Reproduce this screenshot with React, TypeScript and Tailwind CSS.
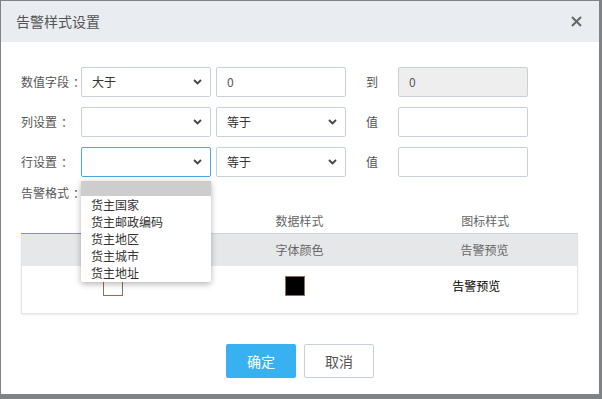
import React from 'react';

const font = { fontFamily: '"Noto Sans CJK SC", "Liberation Sans", sans-serif' };

const Chevron = () => (
  <svg width="9" height="6" viewBox="0 0 9 6" className="shrink-0">
    <path d="M1 1 L4.5 4.5 L8 1" fill="none" stroke="#444" strokeWidth="1.8" />
  </svg>
);

const Select = ({ value = '', focused = false }: { value?: string; focused?: boolean }) => (
  <div
    className={`w-[130px] h-[30px] flex items-center justify-between pl-[10px] pr-[8px] bg-white border rounded-[2px] ${
      focused ? 'border-[#4aa8e8]' : 'border-[#c8d0d8]'
    }`}
  >
    <span className="text-[12px] text-[#333]">{value}</span>
    <Chevron />
  </div>
);

const Input = ({ value = '', disabled = false }: { value?: string; disabled?: boolean }) => (
  <div
    className={`w-[130px] h-[30px] flex items-center px-[10px] border border-[#c8d0d8] rounded-[2px] ${
      disabled ? 'bg-[#eeeeee]' : 'bg-white'
    }`}
  >
    <span className="text-[12px] text-[#555]">{value}</span>
  </div>
);

const Label = ({ children }: { children: React.ReactNode }) => (
  <div className="w-[60px] text-[12px] text-[#555] whitespace-nowrap">
    {children}
    <span className="ml-[4px]">：</span>
  </div>
);

const options = ['货主国家', '货主邮政编码', '货主地区', '货主城市', '货主地址'];

export default function App() {
  return (
    <div className="w-[602px] h-[399px] bg-[#7f8286] pt-px pl-px overflow-hidden" style={font}>
      <div className="w-[598px] h-[393px] bg-white flex flex-col">
        {/* 标题栏 */}
        <div className="h-[41px] bg-[#e9ecf0] flex items-center justify-between pl-[15px] pr-[17px]">
          <span className="text-[14px] text-[#555]">告警样式设置</span>
          <svg width="11" height="11" viewBox="0 0 11 11">
            <path d="M1 1 L10 10 M10 1 L1 10" stroke="#666" strokeWidth="2" />
          </svg>
        </div>

        {/* 表单 */}
        <div className="relative flex flex-col pt-[25px] pl-[20px]">
          <div className="flex items-center h-[30px]">
            <Label>数值字段</Label>
            <Select value="大于" />
            <div className="ml-[5px]">
              <Input value="0" />
            </div>
            <div className="w-[52px] text-center text-[12px] text-[#555]">到</div>
            <Input value="0" disabled />
          </div>
          <div className="flex items-center h-[30px] mt-[10px]">
            <Label>列设置</Label>
            <Select />
            <div className="ml-[5px]">
              <Select value="等于" />
            </div>
            <div className="w-[52px] text-center text-[12px] text-[#555]">值</div>
            <Input />
          </div>
          <div className="flex items-center h-[30px] mt-[10px]">
            <Label>行设置</Label>
            <Select focused />
            <div className="ml-[5px]">
              <Select value="等于" />
            </div>
            <div className="w-[52px] text-center text-[12px] text-[#555]">值</div>
            <Input />
          </div>
          <div className="h-[18px] mt-[7px] flex items-center text-[12px] text-[#555]">
            告警格式<span className="ml-[4px]">：</span>
          </div>

          {/* 样式表格 */}
          <div className="w-[557px]">
            <div className="flex h-[32px] text-[12px] text-[#666]">
              <div className="flex-1 border-b border-[#41a9e6]" />
              <div className="flex-1 flex items-center justify-center pt-[6px] border-b border-[#cfd6dd]">数据样式</div>
              <div className="flex-1 flex items-center justify-center pt-[6px] border-b border-[#cfd6dd]">图标样式</div>
            </div>
            <div className="border-x border-b border-[#e2e4e6] shadow-[0_1px_2px_rgba(0,0,0,0.08)]">
              <div className="flex h-[32px] bg-[#e6e7e9] text-[12px] text-[#666]">
                <div className="flex-1" />
                <div className="flex-1 flex items-center justify-center">字体颜色</div>
                <div className="flex-1 flex items-center justify-center">告警预览</div>
              </div>
              <div className="flex h-[47px] pt-[10px]">
                <div className="flex-1 flex justify-center">
                  <div className="w-[20px] h-[20px] bg-white border border-[#8c7058]" />
                </div>
                <div className="flex-1 flex justify-center">
                  <div className="w-[20px] h-[20px] bg-black border border-[#8c7058]" />
                </div>
                <div className="flex-1 flex justify-center h-[20px] items-center pr-[10px]">
                  <span className="text-[12px] text-black">告警预览</span>
                </div>
              </div>
            </div>
          </div>

          {/* 下拉列表 */}
          <div className="absolute left-[80px] top-[139px] w-[130px] bg-white rounded-[2px] shadow-[0_2px_6px_rgba(0,0,0,0.3)] pb-px">
            <div className="h-[15px] bg-[#cdcdcd]" />
            {options.map((o) => (
              <div key={o} className="h-[17px] flex items-center pl-[10px] text-[12px] text-[#333]">
                {o}
              </div>
            ))}
          </div>
        </div>

        {/* 按钮 */}
        <div className="flex justify-center gap-[8px] mt-[30px]">
          <button className="w-[70px] h-[34px] bg-[#38b1f1] text-white text-[14px] rounded-[2px]">确定</button>
          <button className="w-[70px] h-[34px] bg-white border border-[#c8d0d8] text-[#555] text-[14px] rounded-[2px]">
            取消
          </button>
        </div>
      </div>
    </div>
  );
}
